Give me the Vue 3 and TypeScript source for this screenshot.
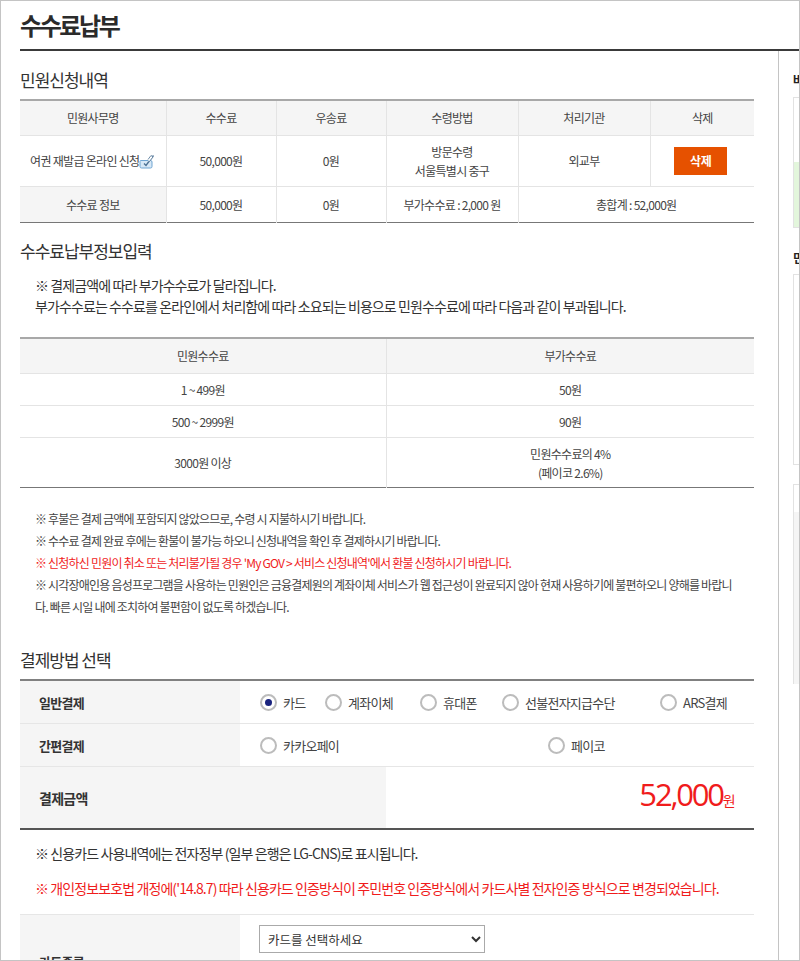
<template>
  <div class="frame">
    <header class="top">
      <h1 class="page-title">수수료납부</h1>
    </header>
    <div class="body">
      <main class="main">
        <h2 class="sec-title first">민원신청내역</h2>
        <table class="tbl fee-tbl">
          <colgroup>
            <col class="c1" /><col class="c2" /><col class="c3" /><col class="c4" /><col class="c5" /><col />
          </colgroup>
          <thead>
            <tr class="h35">
              <th>민원사무명</th>
              <th>수수료</th>
              <th>우송료</th>
              <th>수령방법</th>
              <th>처리기관</th>
              <th>삭제</th>
            </tr>
          </thead>
          <tbody>
            <tr class="h51">
              <td class="no-left">
                여권 재발급 온라인 신청<svg class="apply-icon" width="16" height="15" viewBox="0 0 16 15">
                  <path d="M1.5 6.5h10a1.5 1.5 0 0 1 1.5 1.500v4.500a1.500 1.500 0 0 1-1.500 1.500h-9a1.500 1.500 0 0 1-1.500-1.500V7.500z" fill="#d7e8f6" stroke="#6fa5d2" />
                  <path d="M5 9.500l2 2 5.500-7.500 2 -2.500" fill="none" stroke="#4a6f92" stroke-width="1.300" />
                  <path d="M9 5.500l3-4 2 1.500-4 5" fill="#fff" stroke="#5d7f9e" stroke-width="0.900" />
                </svg>
              </td>
              <td>50,000원</td>
              <td>0원</td>
              <td>방문수령<br />서울특별시 중구</td>
              <td>외교부</td>
              <td><button type="button" class="del-btn">삭제</button></td>
            </tr>
            <tr class="h36">
              <th class="sum-th">수수료 정보</th>
              <td>50,000원</td>
              <td>0원</td>
              <td>부가수수료 : 2,000 원</td>
              <td colspan="2">총합계 : 52,000원</td>
            </tr>
          </tbody>
        </table>

        <h2 class="sec-title second">수수료납부정보입력</h2>
        <p class="intro">
          ※ 결제금액에 따라 부가수수료가 달라집니다.<br />
          부가수수료는 수수료를 온라인에서 처리함에 따라 소요되는 비용으로 민원수수료에 따라 다음과 같이 부과됩니다.
        </p>
        <table class="tbl extra-tbl">
          <colgroup><col class="half" /><col /></colgroup>
          <thead>
            <tr class="h36"><th>민원수수료</th><th>부가수수료</th></tr>
          </thead>
          <tbody>
            <tr class="h32"><td class="no-left">1 ~ 499원</td><td>50원</td></tr>
            <tr class="h32"><td class="no-left">500 ~ 2999원</td><td>90원</td></tr>
            <tr class="h50"><td class="no-left">3000원 이상</td><td>민원수수료의 4%<br />(페이코 2.6%)</td></tr>
          </tbody>
        </table>

        <ul class="notes">
          <li v-for="n in notes" :key="n.text" :class="{ red: n.red }">{{ n.text }}</li>
        </ul>

        <h2 class="sec-title third">결제방법 선택</h2>
        <div class="pay">
          <div class="pay-row r1">
            <div class="pay-th">일반결제</div>
            <div class="opts opts-a">
              <label v-for="o in generalPay" :key="o" class="opt">
                <span class="radio" :class="{ on: o === selected }"></span>{{ o }}
              </label>
            </div>
          </div>
          <div class="pay-row r2">
            <div class="pay-th">간편결제</div>
            <div class="opts opts-b">
              <label v-for="o in easyPay" :key="o" class="opt">
                <span class="radio"></span>{{ o }}
              </label>
            </div>
          </div>
          <div class="pay-row total">
            <div class="pay-th total-th">결제금액</div>
            <div class="total-val"><strong>52,000</strong><span>원</span></div>
          </div>
        </div>
        <p class="card-note">※ 신용카드 사용내역에는 전자정부 (일부 은행은 LG-CNS)로 표시됩니다.</p>
        <p class="card-note warn">※ 개인정보보호법 개정에('14.8.7) 따라 신용카드 인증방식이 주민번호 인증방식에서 카드사별 전자인증 방식으로 변경되었습니다.</p>
        <div class="pay-row card-row">
          <div class="pay-th card-th">카드종류</div>
          <div class="card-sel">
            <select class="sel">
              <option>카드를 선택하세요</option>
            </select>
          </div>
        </div>
      </main>
      <aside class="side">
        <h3 class="side-title">바</h3>
        <div class="side-box box-a"><div class="green"></div></div>
        <h3 class="side-title t2">민</h3>
        <div class="side-box box-b"></div>
        <div class="side-box box-c"><div class="gray"></div></div>
      </aside>
    </div>
  </div>
</template>

<script setup lang="ts">
const notes = [
  { text: '※ 후불은 결제 금액에 포함되지 않았으므로, 수령 시 지불하시기 바랍니다.' },
  { text: '※ 수수료 결제 완료 후에는 환불이 불가능 하오니 신청내역을 확인 후 결제하시기 바랍니다.' },
  { text: "※ 신청하신 민원이 취소 또는 처리불가될 경우 'My GOV > 서비스 신청내역'에서 환불 신청하시기 바랍니다.", red: true },
  { text: '※ 시각장애인용 음성프로그램을 사용하는 민원인은 금융결제원의 계좌이체 서비스가 웹 접근성이 완료되지 않아 현재 사용하기에 불편하오니 양해를 바랍니다. 빠른 시일 내에 조치하여 불편함이 없도록 하겠습니다.' },
]

const generalPay = ['카드', '계좌이체', '휴대폰', '선불전자지급수단', 'ARS결제']
const easyPay = ['카카오페이', '페이코']
const selected = '카드'
</script>

<style>
body {
  margin: 0;
  background: #fff;
}
</style>

<style scoped>
.frame {
  width: 800px;
  height: 961px;
  box-sizing: border-box;
  border: 1px solid #c4c4c4;
  overflow: hidden;
  background: #fff;
  color: #444;
  font-family: "Noto Sans CJK KR", "Noto Sans", sans-serif;
  font-size: 12px;
  letter-spacing: -0.7px;
}

.top {
  margin-left: 19px;
  height: 48px;
  border-bottom: 2px solid #3a3a3a;
}

.page-title {
  margin: 0;
  padding-top: 6px;
  font-size: 24px;
  line-height: 36px;
  font-weight: 700;
  color: #2b2b2b;
  letter-spacing: -2.4px;
}

.body {
  display: flex;
}

.main {
  width: 778px;
  box-sizing: border-box;
  padding-left: 19px;
  border-right: 1px solid #c4c4c4;
  height: 920px;
  flex: none;
}

.sec-title {
  margin: 0;
  font-size: 17px;
  line-height: 24px;
  font-weight: 400;
  color: #333;
  letter-spacing: -1px;
}

.sec-title.first {
  padding-top: 17px;
  padding-bottom: 7px;
}

.sec-title.second {
  padding-top: 16px;
}

.sec-title.third {
  padding-top: 30px;
  padding-bottom: 7px;
}

.tbl {
  width: 734px;
  table-layout: fixed;
  border-collapse: collapse;
  border-top: 2px solid #a8a8a8;
  border-bottom: 1px solid #777;
}

.c1 { width: 146px; }
.c2 { width: 110px; }
.c3 { width: 110px; }
.c4 { width: 132px; }
.c5 { width: 132px; }
.half { width: 366px; }

.tbl th,
.tbl td {
  padding: 0;
  text-align: center;
  font-weight: 400;
  font-size: 12px;
  line-height: 19px;
  color: #444;
  border-bottom: 1px solid #e4e4e4;
  border-left: 1px solid #e4e4e4;
}

.tbl tbody tr:last-child th,
.tbl tbody tr:last-child td {
  border-bottom: 0;
}

.tbl th {
  background: #f5f5f5;
}

.tbl th:first-child,
.no-left,
.tbl td:first-child {
  border-left: 0;
}

.h35 { height: 35px; }
.h36 { height: 36px; }
.h32 { height: 32px; }
.h50 { height: 50px; }
.h51 { height: 51px; }

.sum-th {
  border-top: 1px solid #e4e4e4;
}

.apply-icon {
  vertical-align: -3px;
}

.del-btn {
  width: 53px;
  height: 28px;
  margin-right: 3px;
  border: 0;
  background: #e65100;
  color: #fff;
  font-family: inherit;
  font-size: 12px;
  font-weight: 700;
  letter-spacing: -0.3px;
}

.intro {
  margin: 12px 0 20px 15px;
  font-size: 14px;
  line-height: 21px;
  color: #333;
  letter-spacing: -0.9px;
}

.notes {
  list-style: none;
  margin: 20px 0 0;
  padding: 0 18px 0 15px;
  width: 734px;
  box-sizing: border-box;
  font-size: 12px;
  line-height: 22px;
  color: #444;
  letter-spacing: -0.8px;
  word-break: break-all;
}

.notes .red {
  color: #f01c1c;
}

.pay {
  width: 734px;
  border-top: 2px solid #808080;
  border-bottom: 2px solid #555;
}

.pay-row {
  display: flex;
}

.r1 {
  height: 42px;
  border-bottom: 1px solid #e6e6e6;
}

.r2 {
  height: 42px;
  border-bottom: 1px solid #e6e6e6;
}

.total {
  height: 61px;
}

.pay-th {
  width: 220px;
  flex: none;
  box-sizing: border-box;
  padding-left: 19px;
  background: #f5f5f5;
  display: flex;
  align-items: center;
  font-size: 13px;
  font-weight: 700;
  color: #333;
}

.total-th {
  width: 366px;
  font-size: 14px;
}

.opts {
  display: grid;
  align-items: center;
  padding-left: 20px;
  font-size: 13px;
  color: #444;
  letter-spacing: -0.75px;
}

.opts-a {
  grid-template-columns: 65px 95px 82px 158px auto;
}

.opts-b {
  grid-template-columns: 288px auto;
}

.opt {
  display: flex;
  align-items: center;
  gap: 6px;
  white-space: nowrap;
}

.radio {
  width: 17px;
  height: 17px;
  box-sizing: border-box;
  border: 2px solid #bcbcbc;
  border-radius: 50%;
  background: #fff;
  display: flex;
  align-items: center;
  justify-content: center;
  flex: none;
}

.radio.on::after {
  content: "";
  width: 7px;
  height: 7px;
  border-radius: 50%;
  background: #1a237e;
}

.total-val {
  flex: 1;
  display: flex;
  align-items: baseline;
  justify-content: flex-end;
  padding: 5px 19px 0 0;
  color: #f01c1c;
}

.total-val strong {
  font-family: "Open Sans", "Noto Sans", sans-serif;
  font-size: 31px;
  line-height: 44px;
  font-weight: 400;
  letter-spacing: -2.2px;
}

.total-val span {
  font-size: 14px;
}

.card-note {
  margin: 0 0 0 15px;
  padding-top: 13px;
  font-size: 14px;
  line-height: 20px;
  color: #333;
  letter-spacing: -0.9px;
}

.card-note.warn {
  padding-top: 15px;
  color: #f01c1c;
}

.card-row {
  width: 734px;
  margin-top: 16px;
  border-top: 1px solid #e6e6e6;
  height: 60px;
}

.card-th {
  align-items: flex-start;
  padding-top: 37px;
}

.card-sel {
  padding: 10px 0 0 19px;
}

.sel {
  width: 226px;
  height: 28px;
  box-sizing: border-box;
  border: 1px solid #aaa;
  background: #fff;
  padding-left: 4px;
  font-family: inherit;
  font-size: 12.5px;
  color: #333;
  letter-spacing: 0;
}

.side {
  flex: 1;
  min-width: 0;
  padding-left: 14px;
  overflow: hidden;
}

.side-title {
  margin: 0;
  padding-top: 19px;
  height: 27px;
  font-size: 12px;
  line-height: 20px;
  font-weight: 700;
  color: #222;
  white-space: nowrap;
}

.side-title.t2 {
  padding-top: 20px;
  height: 26px;
}

.side-box {
  width: 200px;
  box-sizing: border-box;
  border: 1px solid #e2e2e2;
}

.box-a {
  height: 131px;
  padding-top: 64px;
}

.green {
  height: 65px;
  background: #e3f6dc;
}

.box-b {
  height: 191px;
}

.box-c {
  height: 200px;
  margin-top: 19px;
  padding-top: 27px;
}

.gray {
  height: 172px;
  background: #f5f5f5;
}
</style>
